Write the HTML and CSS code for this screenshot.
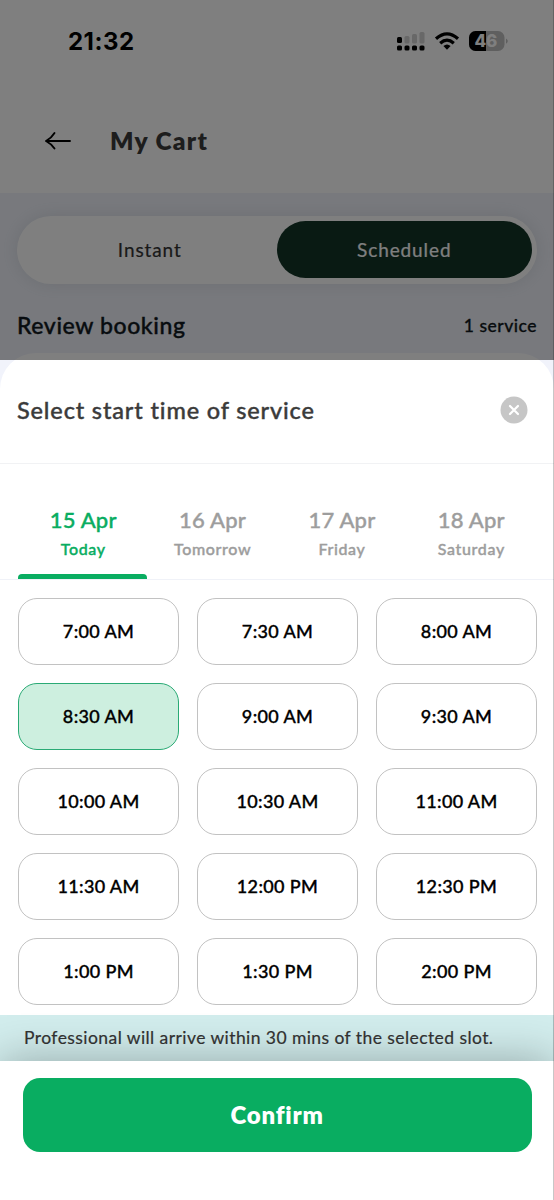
FILE: index.html
```html
<!DOCTYPE html>
<html lang="en">
<head>
<meta charset="utf-8">
<title>My Cart</title>
<link rel="stylesheet" href="styles.css">
</head>
<body>
<div class="screen">
  <div class="status">
    <span class="clock">21:32</span>
    <svg class="status-icons" width="112" height="22" viewBox="0 0 112 22">
      <g fill="#000">
        <rect x="0" y="7" width="5" height="6" rx="1.5"/>
        <rect x="0" y="15.500" width="5" height="5" rx="1.5"/>
        <rect x="7.500" y="15.500" width="5" height="5" rx="1.5"/>
        <rect x="15" y="15.500" width="5" height="5" rx="1.5"/>
        <rect x="22.500" y="15.500" width="5" height="5" rx="1.500"/>
      </g>
      <g fill="#d0d0d0">
        <rect x="7.500" y="6" width="5" height="7.500" rx="1.500"/>
        <rect x="15" y="4" width="5" height="9.500" rx="1.500"/>
        <rect x="22.500" y="2" width="5" height="11.500" rx="1.500"/>
      </g>
      <g fill="none" stroke="#000" stroke-width="3.200">
        <path d="M39 8.800Q50 -1.200 61 8.800"/>
        <path d="M43.200 13.200Q50 7.200 56.800 13.200"/>
      </g>
      <path d="M46.400 16Q50 13 53.600 16L50 19.800Z" fill="#000"/>
      <rect x="72" y="1" width="35.500" height="20" rx="6.500" fill="#bebebe"/>
      <path d="M89 1H78.500A6.500 6.500 0 0 0 72 7.500V14.500A6.500 6.500 0 0 0 78.500 21H89Z" fill="#000"/>
      <path d="M109 8.500Q110.800 9.500 110.800 11T109 13.800Z" fill="#bebebe"/>
      <text class="battery" x="77.500" y="17" fill="#fff">4</text>
      <text class="battery" x="89" y="17" fill="#fff">6</text>
    </svg>
  </div>
  <div class="titlebar">
    <svg width="28" height="20" viewBox="0 0 28 20" fill="none" stroke="#000" stroke-width="1.900" stroke-linecap="round" stroke-linejoin="round"><path d="M26 10H2M10.500 2Q7.500 7 2 10Q7.500 13 10.500 17.500"/></svg>
    <h1 class="title">My Cart</h1>
  </div>
  <div class="cart">
    <div class="switch">
      <span class="option">Instant</span>
      <span class="option option-active">Scheduled</span>
    </div>
    <div class="review">
      <h2 class="review-title">Review booking</h2>
      <span class="review-count">1 service</span>
    </div>
  </div>
  <div class="sheet">
    <div class="sheet-head">
      <h2 class="sheet-title">Select start time of service</h2>
      <svg width="28" height="28" viewBox="0 0 28 28"><circle cx="14" cy="14" r="13.500" fill="#c6c6c6"/><path d="M10 10L18 18M18 10L10 18" stroke="#fff" stroke-width="2.200" stroke-linecap="round"/></svg>
    </div>
    <div class="days">
      <div class="day day-active"><span class="date">15 Apr</span><span class="name">Today</span></div>
      <div class="day"><span class="date">16 Apr</span><span class="name">Tomorrow</span></div>
      <div class="day"><span class="date">17 Apr</span><span class="name">Friday</span></div>
      <div class="day"><span class="date">18 Apr</span><span class="name">Saturday</span></div>
    </div>
    <div class="slots">
      <div class="slot">7:00 AM</div><div class="slot">7:30 AM</div><div class="slot">8:00 AM</div>
      <div class="slot slot-active">8:30 AM</div><div class="slot">9:00 AM</div><div class="slot">9:30 AM</div>
      <div class="slot">10:00 AM</div><div class="slot">10:30 AM</div><div class="slot">11:00 AM</div>
      <div class="slot">11:30 AM</div><div class="slot">12:00 PM</div><div class="slot">12:30 PM</div>
      <div class="slot">1:00 PM</div><div class="slot">1:30 PM</div><div class="slot">2:00 PM</div>
    </div>
    <div class="note">Professional will arrive within 30 mins of the selected slot.</div>
    <div class="footer"><div class="confirm">Confirm</div></div>
  </div>
  <div class="overlay"></div>
  <div class="edge"></div>
</div>
</body>
</html>
```

FILE: styles.css
```css
* { box-sizing: border-box; }
body { margin: 0; font-family: Lato, "Open Sans", sans-serif; }
h1, h2 { margin: 0; }
.screen { position: relative; width: 554px; height: 1200px; overflow: hidden; background: #f1f3fb; }
.status { display: flex; justify-content: space-between; align-items: center; height: 82px; padding: 0 45px 0 68px; background: #fff; }
.clock { padding-top: 2px; font: 700 24px/30px Inter, sans-serif; letter-spacing: 0.500px; }
.battery { font: 800 17px Inter, sans-serif; }
.titlebar { display: flex; align-items: center; gap: 38px; height: 111px; padding: 7px 44px 0 44px; background: #fff; }
.title { font-size: 24.500px; font-weight: 800; line-height: 30px; letter-spacing: 1.300px; color: #3b3b3b; }
.cart { height: 160px; padding: 23px 17px 0; }
.switch { display: flex; height: 68px; padding: 5px 5.500px 6px; border-radius: 34px; background: #fff; box-shadow: 0 0 18px rgba(90, 110, 110, 0.15); }
.option { display: flex; flex: 1; align-items: center; justify-content: center; padding-bottom: 1px; border-radius: 29px; font-size: 19px; letter-spacing: 0.900px; color: #333; -webkit-text-stroke: 0.200px; }
.option-active { background: #133426; color: #fff; }
.review { display: flex; align-items: center; justify-content: space-between; margin-top: 24px; height: 34px; }
.review-title { font-size: 23px; font-weight: 500; letter-spacing: 0.600px; color: #101820; -webkit-text-stroke: 0.400px; }
.review-count { font-size: 17.500px; font-weight: 500; letter-spacing: 0.500px; color: #101820; -webkit-text-stroke: 0.300px; }
.sheet { height: 847px; border-radius: 36px 36px 0 0; background: #fff; overflow: hidden; }
.sheet-head { display: flex; align-items: center; justify-content: space-between; height: 111px; padding: 4px 26px 0 17px; border-bottom: 1px solid #f1f2f4; }
.sheet-title { font-size: 23.500px; font-weight: 500; letter-spacing: 0.850px; color: #3b3b3b; -webkit-text-stroke: 0.400px; }
.days { display: flex; height: 115.500px; padding: 0 18px 0 18.500px; border-bottom: 1px solid #f0f2f8; }
.day { position: relative; display: flex; flex: 1; flex-direction: column; align-items: center; padding-top: 41px; color: #9d9d9d; font-weight: 500; -webkit-text-stroke: 0.400px; }
.date { font-size: 22px; line-height: 30px; letter-spacing: 0.200px; }
.name { font-size: 16px; line-height: 27px; letter-spacing: 0.650px; }
.day-active { color: #09ad61; }
.day-active::after { content: ""; position: absolute; bottom: 0; left: -0.500px; width: 100%; height: 4.500px; border-radius: 4px 4px 0 0; background: #09ad61; }
.slots { display: grid; grid-template-columns: repeat(3, 1fr); grid-auto-rows: 67px; gap: 18px 18px; height: 435.500px; padding: 18.500px 17px 0 18px; }
.slot { display: flex; align-items: center; justify-content: center; padding-bottom: 1px; border: 1px solid #c2c2c2; border-radius: 19px; font-size: 18px; font-weight: 500; letter-spacing: 0.350px; color: #000; -webkit-text-stroke: 0.350px; }
.slot-active { border-color: #2aaa75; background: #cdefdf; }
.note { height: 46px; padding-left: 24px; background: #d2eded; color: #333; font-size: 17.500px; line-height: 46px; letter-spacing: 0.430px; white-space: nowrap; -webkit-text-stroke: 0.200px; }
.footer { position: relative; height: 139px; padding: 17px 22.500px; background: #fff; box-shadow: 0 0 42px rgba(0, 0, 0, 0.300); }
.confirm { display: flex; align-items: center; justify-content: center; height: 74px; padding-bottom: 1px; border-radius: 17px; background: #09ad61; color: #fff; font-size: 24px; font-weight: 800; letter-spacing: 0.800px; }
.overlay { position: absolute; inset: 0 0 auto; height: 360px; background: rgba(0, 0, 0, 0.5); }
.edge { position: absolute; top: 0; right: 0; width: 1px; height: 1200px; background: rgba(0, 0, 0, 0.220); }
```
